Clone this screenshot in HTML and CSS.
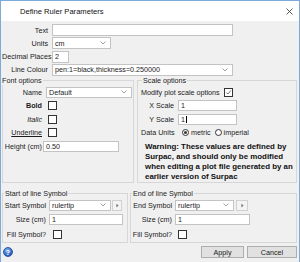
FILE: index.html
```html
<!DOCTYPE html>
<html lang="en">
<head>
    <meta charset="UTF-8">
    <title>Define Ruler Parameters</title>
    <link rel="stylesheet" href="styles.css">
</head>
<body>
    <div class="window">
        <div class="titlebar">
            <span class="title">Define Ruler Parameters</span>
            <svg class="close" viewBox="0 0 7 7"><path d="M0.5 0.5L6.5 6.5M6.5 0.5L0.5 6.5"/></svg>
        </div>

        <div class="body">
            <div class="top">
                <div class="row">
                    <span class="lbl">Text</span>
                    <div class="field w-wide"></div>
                </div>
                <div class="row">
                    <span class="lbl">Units</span>
                    <div class="field select w-units">cm<svg class="chev" viewBox="0 0 6 4"><path d="M0.5 0.5L3 3L5.5 0.5"/></svg></div>
                </div>
                <div class="row">
                    <span class="lbl">Decimal Places</span>
                    <div class="field w-dec">2</div>
                </div>
                <div class="row">
                    <span class="lbl">Line Colour</span>
                    <div class="field select w-wide">pen:1=black,thickness=0.250000<svg class="chev" viewBox="0 0 6 4"><path d="M0.5 0.5L3 3L5.5 0.5"/></svg></div>
                </div>
            </div>

            <div class="groups groups-mid">
                <fieldset class="group font-group">
                    <legend>Font options</legend>
                    <div class="grow">
                        <span class="glbl">Name</span>
                        <div class="field select w-name">Default<svg class="chev" viewBox="0 0 6 4"><path d="M0.5 0.5L3 3L5.5 0.5"/></svg></div>
                    </div>
                    <div class="grow">
                        <span class="glbl bold">Bold</span>
                        <span class="check ml2"></span>
                    </div>
                    <div class="grow">
                        <span class="glbl italic">Italic</span>
                        <span class="check ml2"></span>
                    </div>
                    <div class="grow">
                        <span class="glbl under">Underline</span>
                        <span class="check ml2"></span>
                    </div>
                    <div class="grow tight">
                        <span class="glbl">Height (cm)</span>
                        <div class="field w-height">0.50</div>
                    </div>
                </fieldset>

                <fieldset class="group scale-group">
                    <legend>Scale options</legend>
                    <div class="grow">
                        <span>Modify plot scale options</span>
                        <span class="check checked"><svg viewBox="0 0 9 9"><path d="M1.8 4.6L3.7 6.5L7.4 2"/></svg></span>
                    </div>
                    <div class="grow">
                        <span class="slbl">X Scale</span>
                        <div class="field w-scale">1</div>
                    </div>
                    <div class="grow">
                        <span class="slbl">Y Scale</span>
                        <div class="field w-scale">1<span class="caret"></span></div>
                    </div>
                    <div class="grow">
                        <span class="slbl left">Data Units</span>
                        <div class="radios">
                            <span class="radio on"></span><span>metric</span>
                            <span class="radio second"></span><span>imperial</span>
                        </div>
                    </div>
                    <p class="warning">Warning: These values are defined by<br>Surpac, and should only be modified<br>when editing a plot file generated by an<br>earlier version of Surpac</p>
                </fieldset>
            </div>

            <div class="groups groups-bottom">
                <fieldset class="group sym-group">
                    <legend>Start of line Symbol</legend>
                    <div class="grow">
                        <span class="blbl">Start Symbol</span>
                        <div class="combo">
                            <div class="field select w-sym">rulertip<svg class="chev" viewBox="0 0 6 4"><path d="M0.5 0.5L3 3L5.5 0.5"/></svg></div>
                            <span class="arrow-btn"><svg viewBox="0 0 4 6"><path d="M0.5 0.5L3.5 3L0.5 5.5Z"/></svg></span>
                        </div>
                    </div>
                    <div class="grow">
                        <span class="blbl">Size (cm)</span>
                        <div class="field w-size">1</div>
                    </div>
                    <div class="grow">
                        <span class="blbl">Fill Symbol?</span>
                        <span class="check ml4"></span>
                    </div>
                </fieldset>

                <fieldset class="group sym-group end-group">
                    <legend>End of line Symbol</legend>
                    <div class="grow">
                        <span class="blbl">End Symbol</span>
                        <div class="combo">
                            <div class="field select w-sym-end">rulertip<svg class="chev" viewBox="0 0 6 4"><path d="M0.5 0.5L3 3L5.5 0.5"/></svg></div>
                            <span class="arrow-btn"><svg viewBox="0 0 4 6"><path d="M0.5 0.5L3.5 3L0.5 5.5Z"/></svg></span>
                        </div>
                    </div>
                    <div class="grow">
                        <span class="blbl">Size (cm)</span>
                        <div class="field w-size-end">1</div>
                    </div>
                    <div class="grow">
                        <span class="blbl">Fill Symbol?</span>
                        <span class="check ml3"></span>
                    </div>
                </fieldset>
            </div>
        </div>

        <div class="footer">
            <span class="help">?</span>
            <div class="buttons">
                <button class="btn btn-apply">Apply</button>
                <button class="btn btn-cancel">Cancel</button>
            </div>
        </div>
    </div>
</body>
</html>
```

FILE: styles.css
```css
* {
    margin: 0;
    padding: 0;
    box-sizing: border-box;
}

body {
    font-family: "Liberation Sans", Arial, sans-serif;
    font-size: 7.2px;
    color: #1b1b1b;
    background: #ffffff;
}

.window {
    width: 300px;
    height: 262px;
    border: 1px solid #7eaadb;
    border-bottom: none;
    background: #f0f0f0;
    display: flex;
    flex-direction: column;
    overflow: hidden;
}

.titlebar {
    flex: none;
    height: 20px;
    background: #ffffff;
    display: flex;
    align-items: center;
    padding: 0 6px 0 19px;
}

.title {
    flex: 1;
    font-size: 7.6px;
    color: #111;
}

.close {
    width: 7px;
    height: 7px;
    stroke: #333;
    stroke-width: 0.8;
    fill: none;
}

.body {
    flex: none;
    padding: 3px 2px 0 1px;
    display: flex;
    flex-direction: column;
}

/* top rows */
.top {
    display: flex;
    flex-direction: column;
    gap: 1.3px;
}

.row {
    display: flex;
    align-items: center;
    height: 12px;
    gap: 4px;
}

.lbl {
    flex: none;
    width: 46px;
    text-align: right;
    white-space: nowrap;
}

.field {
    flex: none;
    height: 100%;
    background: #ffffff;
    border: 1px solid #c3c3c3;
    padding: 0 2px;
    display: flex;
    align-items: center;
    white-space: nowrap;
    overflow: hidden;
}

.select {
    justify-content: space-between;
}

.chev {
    flex: none;
    width: 6px;
    height: 4px;
    margin-right: 2px;
    stroke: #8a8a8a;
    stroke-width: 0.8;
    fill: none;
}

.w-wide { width: 181px; }
.w-units { width: 59px; }
.w-dec { width: 17px; }
.w-name { width: 86px; }
.w-height { width: 76px; }
.w-scale { width: 59px; }
.w-sym { width: 62px; }
.w-size { width: 74px; }
.w-sym-end { width: 59px; }
.w-size-end { width: 75px; }

.caret {
    display: inline-block;
    width: 1px;
    height: 7px;
    margin-left: 1px;
    background: #000;
}

/* group boxes */
.groups {
    display: grid;
    align-items: stretch;
}

.groups-mid {
    grid-template-columns: 132px 1fr;
    gap: 3px;
}

.groups-bottom {
    grid-template-columns: 126px 1fr;
    gap: 2px;
    margin-top: 5.3px;
}

.group {
    min-width: 0;
    border: 1px solid #d7d7d7;
    padding: 2px 2px 1px 0;
}

.group legend {
    margin-left: 1px;
    padding: 0 1px;
    line-height: 9px;
}

.font-group legend {
    margin-left: -2px;
}

.grow {
    display: flex;
    align-items: center;
    height: 11px;
    gap: 4px;
    white-space: nowrap;
}

.grow + .grow {
    margin-top: 2.5px;
}

.glbl {
    flex: none;
    width: 39px;
    text-align: right;
}

.tight {
    gap: 1px;
}

.bold { font-weight: bold; }
.italic { font-style: italic; }
.under { text-decoration: underline; }

.check {
    flex: none;
    width: 9px;
    height: 9px;
    background: #ffffff;
    border: 1px solid #333;
    display: flex;
}

.check svg {
    width: 100%;
    height: 100%;
    stroke: #333;
    stroke-width: 0.9;
    fill: none;
}

.ml2 { margin-left: 2px; }
.ml3 { margin-left: 3px; }
.ml4 { margin-left: 4px; }

.scale-group {
    padding-left: 3px;
}

.slbl {
    flex: none;
    width: 33px;
    text-align: right;
}

.slbl.left {
    text-align: left;
}

.radios {
    display: flex;
    align-items: center;
    gap: 2px;
    padding-left: 4px;
}

.radio {
    flex: none;
    width: 7px;
    height: 7px;
    border: 1px solid #333;
    border-radius: 50%;
    background: #ffffff;
    display: flex;
    align-items: center;
    justify-content: center;
}

.radio.on::after {
    content: "";
    width: 3px;
    height: 3px;
    border-radius: 50%;
    background: #333;
}

.radio.second {
    margin-left: 2px;
}

.warning {
    margin-top: 4px;
    padding-left: 4px;
    font-weight: bold;
    font-size: 7.9px;
    line-height: 9.7px;
    white-space: nowrap;
    color: #111;
}

/* symbol groups */
.sym-group .grow + .grow {
    margin-top: 3.5px;
}

.sym-group {
    padding-bottom: 2px;
}

.blbl {
    flex: none;
    width: 43px;
    text-align: right;
}

.end-group .blbl {
    width: 41px;
}

.sym-group .grow {
    gap: 3px;
}

.combo {
    display: flex;
    height: 100%;
    gap: 1px;
}

.arrow-btn {
    flex: none;
    width: 10px;
    height: 100%;
    border: 1px solid #d0d0d0;
    background: #f4f4f4;
    display: flex;
    align-items: center;
    justify-content: center;
}

.end-group .arrow-btn {
    width: 12px;
    margin-left: 1px;
}

.arrow-btn svg {
    width: 3px;
    height: 5px;
    fill: #777;
}

/* footer */
.footer {
    flex: 1;
    display: flex;
    align-items: center;
    padding: 0 2px;
}

.help {
    width: 10px;
    height: 10px;
    border-radius: 50%;
    background: radial-gradient(circle at 40% 30%, #7fb2f0, #2d62c4 70%);
    border: 1px solid #2c55a0;
    color: #fff;
    font-size: 7px;
    font-weight: bold;
    display: flex;
    align-items: center;
    justify-content: center;
}

.buttons {
    margin-left: auto;
    display: flex;
    gap: 3px;
}

.btn {
    height: 12px;
    background: #e1e1e1;
    border: 1px solid #adadad;
    font-family: inherit;
    font-size: 7.2px;
    color: #1b1b1b;
}

.btn-apply { width: 43px; }
.btn-cancel { width: 50px; }
```
